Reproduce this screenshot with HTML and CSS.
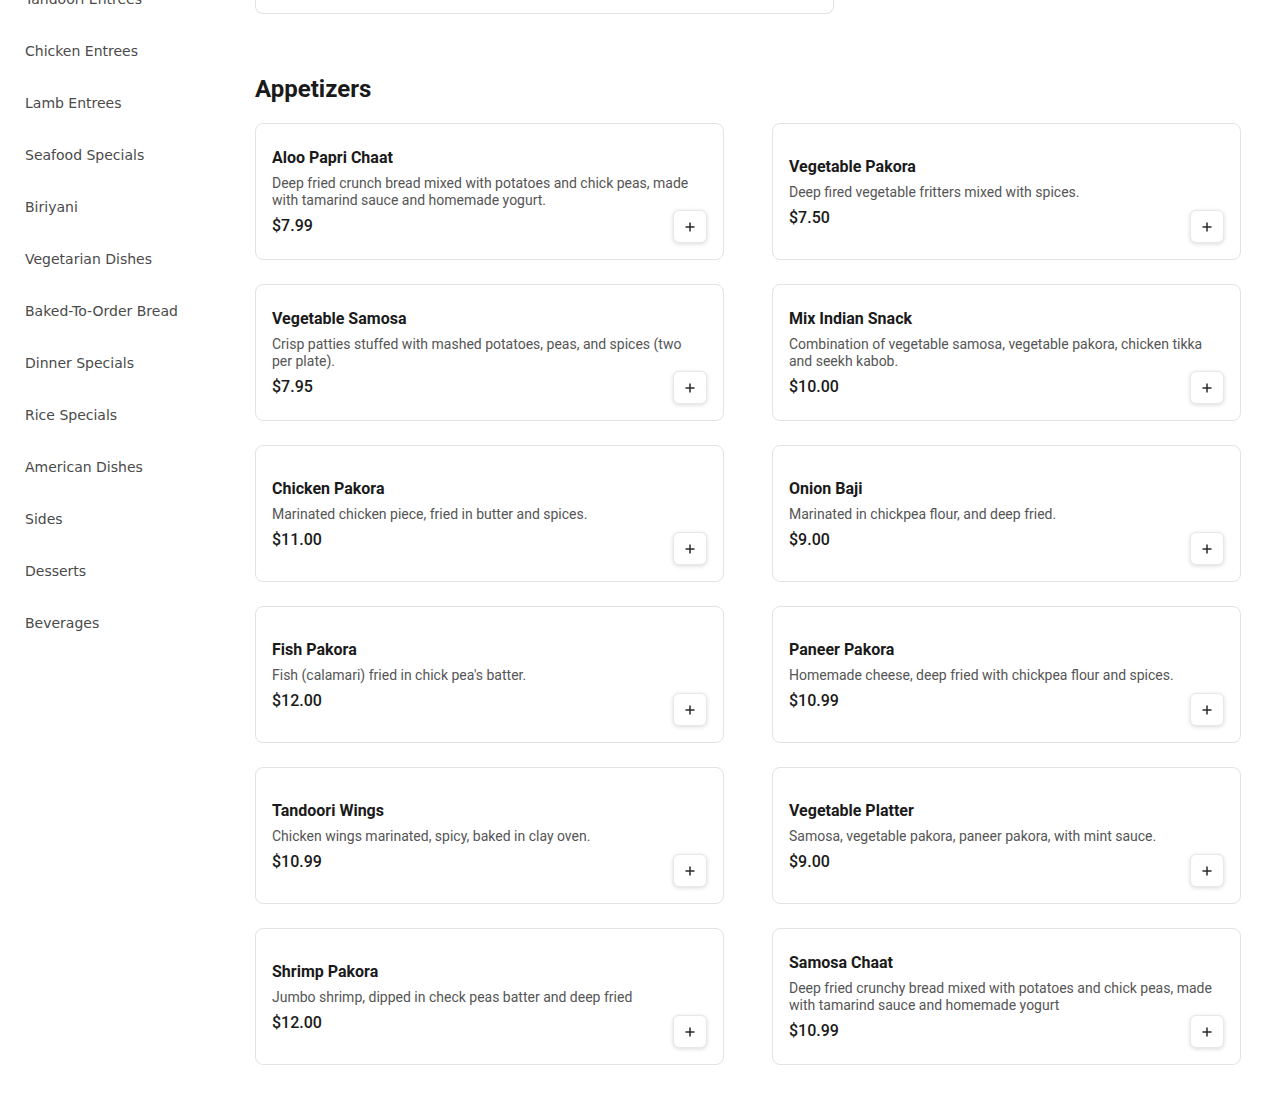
FILE: index.html
```html
<!DOCTYPE html>
<html>
<head>
<meta charset="utf-8">
<link rel="stylesheet" href="styles.css">
</head>
<body>
<div class="page">
  <nav class="sidebar">
    <a class="nav-item">Tandoori Entrees</a>
    <a class="nav-item">Chicken Entrees</a>
    <a class="nav-item">Lamb Entrees</a>
    <a class="nav-item">Seafood Specials</a>
    <a class="nav-item">Biriyani</a>
    <a class="nav-item">Vegetarian Dishes</a>
    <a class="nav-item">Baked-To-Order Bread</a>
    <a class="nav-item">Dinner Specials</a>
    <a class="nav-item">Rice Specials</a>
    <a class="nav-item">American Dishes</a>
    <a class="nav-item">Sides</a>
    <a class="nav-item">Desserts</a>
    <a class="nav-item">Beverages</a>
  </nav>
  <main class="main">
    <div class="prev-card"></div>
    <h2 class="section-title">Appetizers</h2>
    <div class="grid">
      <div class="card"><div class="info"><div class="name">Aloo Papri Chaat</div><div class="desc">Deep fried crunch bread mixed with potatoes and chick peas, made with tamarind sauce and homemade yogurt.</div><div class="price">$7.99</div></div><button class="add"><svg width="12" height="12" viewBox="0 0 12 12"><path d="M6 1.5v9M1.5 6h9" stroke="#2a2a2a" stroke-width="1.5"/></svg></button></div>
      <div class="card"><div class="info"><div class="name">Vegetable Pakora</div><div class="desc">Deep fired vegetable fritters mixed with spices.</div><div class="price">$7.50</div></div><button class="add"><svg width="12" height="12" viewBox="0 0 12 12"><path d="M6 1.5v9M1.5 6h9" stroke="#2a2a2a" stroke-width="1.5"/></svg></button></div>
      <div class="card"><div class="info"><div class="name">Vegetable Samosa</div><div class="desc">Crisp patties stuffed with mashed potatoes, peas, and spices (two per plate).</div><div class="price">$7.95</div></div><button class="add"><svg width="12" height="12" viewBox="0 0 12 12"><path d="M6 1.5v9M1.5 6h9" stroke="#2a2a2a" stroke-width="1.5"/></svg></button></div>
      <div class="card"><div class="info"><div class="name">Mix Indian Snack</div><div class="desc">Combination of vegetable samosa, vegetable pakora, chicken tikka and seekh kabob.</div><div class="price">$10.00</div></div><button class="add"><svg width="12" height="12" viewBox="0 0 12 12"><path d="M6 1.5v9M1.5 6h9" stroke="#2a2a2a" stroke-width="1.5"/></svg></button></div>
      <div class="card"><div class="info"><div class="name">Chicken Pakora</div><div class="desc">Marinated chicken piece, fried in butter and spices.</div><div class="price">$11.00</div></div><button class="add"><svg width="12" height="12" viewBox="0 0 12 12"><path d="M6 1.5v9M1.5 6h9" stroke="#2a2a2a" stroke-width="1.5"/></svg></button></div>
      <div class="card"><div class="info"><div class="name">Onion Baji</div><div class="desc">Marinated in chickpea flour, and deep fried.</div><div class="price">$9.00</div></div><button class="add"><svg width="12" height="12" viewBox="0 0 12 12"><path d="M6 1.5v9M1.5 6h9" stroke="#2a2a2a" stroke-width="1.5"/></svg></button></div>
      <div class="card"><div class="info"><div class="name">Fish Pakora</div><div class="desc">Fish (calamari) fried in chick pea's batter.</div><div class="price">$12.00</div></div><button class="add"><svg width="12" height="12" viewBox="0 0 12 12"><path d="M6 1.5v9M1.5 6h9" stroke="#2a2a2a" stroke-width="1.5"/></svg></button></div>
      <div class="card"><div class="info"><div class="name">Paneer Pakora</div><div class="desc">Homemade cheese, deep fried with chickpea flour and spices.</div><div class="price">$10.99</div></div><button class="add"><svg width="12" height="12" viewBox="0 0 12 12"><path d="M6 1.5v9M1.5 6h9" stroke="#2a2a2a" stroke-width="1.5"/></svg></button></div>
      <div class="card"><div class="info"><div class="name">Tandoori Wings</div><div class="desc">Chicken wings marinated, spicy, baked in clay oven.</div><div class="price">$10.99</div></div><button class="add"><svg width="12" height="12" viewBox="0 0 12 12"><path d="M6 1.5v9M1.5 6h9" stroke="#2a2a2a" stroke-width="1.5"/></svg></button></div>
      <div class="card"><div class="info"><div class="name">Vegetable Platter</div><div class="desc">Samosa, vegetable pakora, paneer pakora, with mint sauce.</div><div class="price">$9.00</div></div><button class="add"><svg width="12" height="12" viewBox="0 0 12 12"><path d="M6 1.5v9M1.5 6h9" stroke="#2a2a2a" stroke-width="1.5"/></svg></button></div>
      <div class="card"><div class="info"><div class="name">Shrimp Pakora</div><div class="desc">Jumbo shrimp, dipped in check peas batter and deep fried</div><div class="price">$12.00</div></div><button class="add"><svg width="12" height="12" viewBox="0 0 12 12"><path d="M6 1.5v9M1.5 6h9" stroke="#2a2a2a" stroke-width="1.5"/></svg></button></div>
      <div class="card"><div class="info"><div class="name">Samosa Chaat</div><div class="desc">Deep fried crunchy bread mixed with potatoes and chick peas, made with tamarind sauce and homemade yogurt</div><div class="price">$10.99</div></div><button class="add"><svg width="12" height="12" viewBox="0 0 12 12"><path d="M6 1.5v9M1.5 6h9" stroke="#2a2a2a" stroke-width="1.5"/></svg></button></div>
    </div>
  </main>
</div>
</body>
</html>
```
FILE: styles.css
```css
html, body {
  margin: 0;
  padding: 0;
  background: #fff;
}
body {
  font-family: Roboto, "Liberation Sans", sans-serif;
  color: #1a1a1a;
}
.page {
  display: flex;
  margin-top: -27px;
}
.sidebar {
  width: 230px;
  padding-left: 25px;
  display: flex;
  flex-direction: column;
  flex-shrink: 0;
}
.nav-item {
  display: flex;
  align-items: center;
  height: 52px;
  font-family: "DejaVu Sans", sans-serif;
  font-size: 14px;
  color: #4a4a4a;
}
.main {
  width: 986px;
  flex-shrink: 0;
}
.prev-card {
  width: 579px;
  height: 41px;
  box-sizing: border-box;
  border: 1px solid #e3e3e3;
  border-top: none;
  border-radius: 0 0 8px 8px;
}
.section-title {
  margin: 61px 0 20px;
  font-size: 24px;
  line-height: 28px;
  font-weight: 700;
  color: #1a1a1a;
}
.grid {
  display: grid;
  grid-template-columns: 469px 469px;
  column-gap: 48px;
  row-gap: 24px;
}
.card {
  position: relative;
  height: 137px;
  box-sizing: border-box;
  border: 1px solid #e3e3e3;
  border-radius: 8px;
  padding: 16px 24px 16px 16px;
  display: flex;
  align-items: center;
}
.info {
  flex: 1;
  min-width: 0;
}
.name {
  font-size: 16px;
  line-height: 19px;
  font-weight: 700;
  color: #1a1a1a;
  margin-bottom: 8px;
}
.desc {
  font-size: 14px;
  line-height: 17px;
  color: #555;
  margin-bottom: 7px;
}
.price {
  font-size: 16px;
  line-height: 19px;
  font-weight: 500;
  color: #1a1a1a;
}
.add {
  position: absolute;
  right: 16px;
  bottom: 16px;
  width: 34px;
  height: 33px;
  box-sizing: border-box;
  padding: 0;
  border: 1px solid #e8e8e8;
  border-radius: 6px;
  background: #fff;
  box-shadow: 0 1px 4px rgba(0, 0, 0, 0.15);
  display: flex;
  align-items: center;
  justify-content: center;
  cursor: pointer;
}
```
